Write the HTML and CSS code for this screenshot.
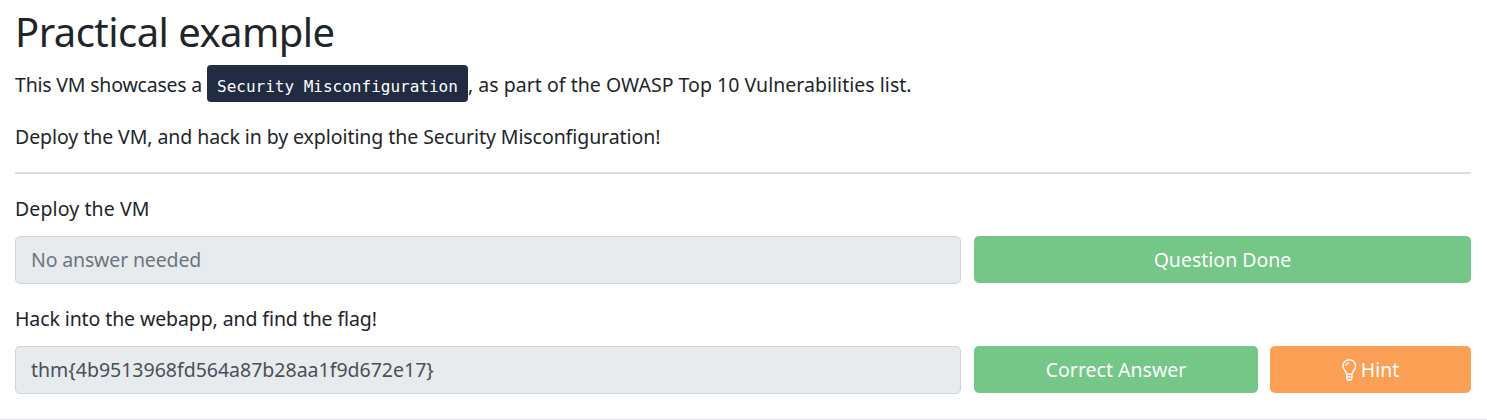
FILE: index.html
```
<!DOCTYPE html>
<html lang="en">
<head>
<meta charset="utf-8">
<title>Practical example</title>
<link rel="stylesheet" href="styles.css">
</head>
<body>
<main class="task">
  <h1 class="title">Practical example</h1>
  <p class="intro"><span class="lead">This VM showcases a</span><code class="term">Security Misconfiguration</code><span class="tail">, as part of the OWASP Top 10 Vulnerabilities list.</span></p>
  <p class="brief"><span>Deploy the VM, and hack in by exploiting the Security Misconfiguration!</span></p>
  <hr class="divider">
  <section class="question">
    <p class="prompt deploy"><span>Deploy the VM</span></p>
    <div class="row">
      <div class="field placeholder"><span>No answer needed</span></div>
      <div class="actions"><button class="btn done"><span>Question Done</span></button></div>
    </div>
  </section>
  <section class="question">
    <p class="prompt flag"><span>Hack into the webapp, and find the flag!</span></p>
    <div class="row">
      <div class="field answer"><span>thm{4b9513968fd564a87b28aa1f9d672e17}</span></div>
      <div class="actions">
        <button class="btn correct"><span>Correct Answer</span></button>
        <button class="btn hint">
          <svg class="bulb" viewBox="0 0 15 22" fill="none" stroke="currentColor" stroke-width="1.4" stroke-linejoin="round"><path d="M4.700 15.500C4.600 12.200 1 11 1 7a6.300 6.200 0 0 1 12.600 0c0 4-3.600 5.200-3.700 8.500"/><path d="M3.700 7a3.500 3.500 0 0 1 3.500-3.200" stroke-width="1.200"/><path d="M4.700 15.200h5.200v4.200l-1.100 1.600h-3l-1.100-1.600zM4.700 18h5.200"/></svg>
          <span>Hint</span>
        </button>
      </div>
    </div>
  </section>
</main>
</body>
</html>
```
FILE: styles.css
```
* { box-sizing: border-box; }
body { margin: 0; background: #fff; color: #212529; font: 19.5px/30px "Noto Sans", sans-serif; }
.task { height: 420px; padding: 8px 16px 0 15px; border-bottom: 1px solid #dee2e6; overflow: hidden; }
.title { margin: 0; font-size: 40px; font-weight: 400; line-height: 48px; letter-spacing: -0.55px; }
.intro { display: flex; align-items: center; height: 37px; margin: 9px 0 20px; white-space: pre; }
.lead { width: 192px; padding-top: 2px; letter-spacing: -0.2px; }
.tail { padding-top: 2px; letter-spacing: 0.03px; }
.term { width: 261px; height: 37px; padding: 3px 10px 0; border-radius: 4px; background: #212c42; color: #fff; font: 16px/37px "DejaVu Sans Mono", monospace; }
.brief { height: 30px; margin: 0; letter-spacing: -0.07px; white-space: nowrap; }
.divider { height: 2px; margin: 20px 0; border: 0; background: #dedede; }
.question { height: 110px; }
.prompt { height: 42px; margin: 0; }
.deploy { letter-spacing: 0.1px; }
.flag { letter-spacing: -0.1px; }
.row { display: grid; grid-template-columns: 946px 1fr; gap: 13px; }
.field { height: 48px; padding: 0 15px; border: 1px solid #ced4da; border-radius: 5px; background: #e8ebee; color: #495057; line-height: 46px; }
.placeholder { color: #6c757d; letter-spacing: -0.15px; }
.actions { display: flex; gap: 12px; }
.btn { display: flex; align-items: center; justify-content: center; gap: 4px; height: 47px; padding: 0; border: 0; border-radius: 5px; background: #75c787; color: #fff; font: inherit; }
.done { width: 100%; }
.correct { width: 284px; }
.hint { width: 201px; background: #fca055; }
.bulb { width: 15px; height: 22px; }
```
